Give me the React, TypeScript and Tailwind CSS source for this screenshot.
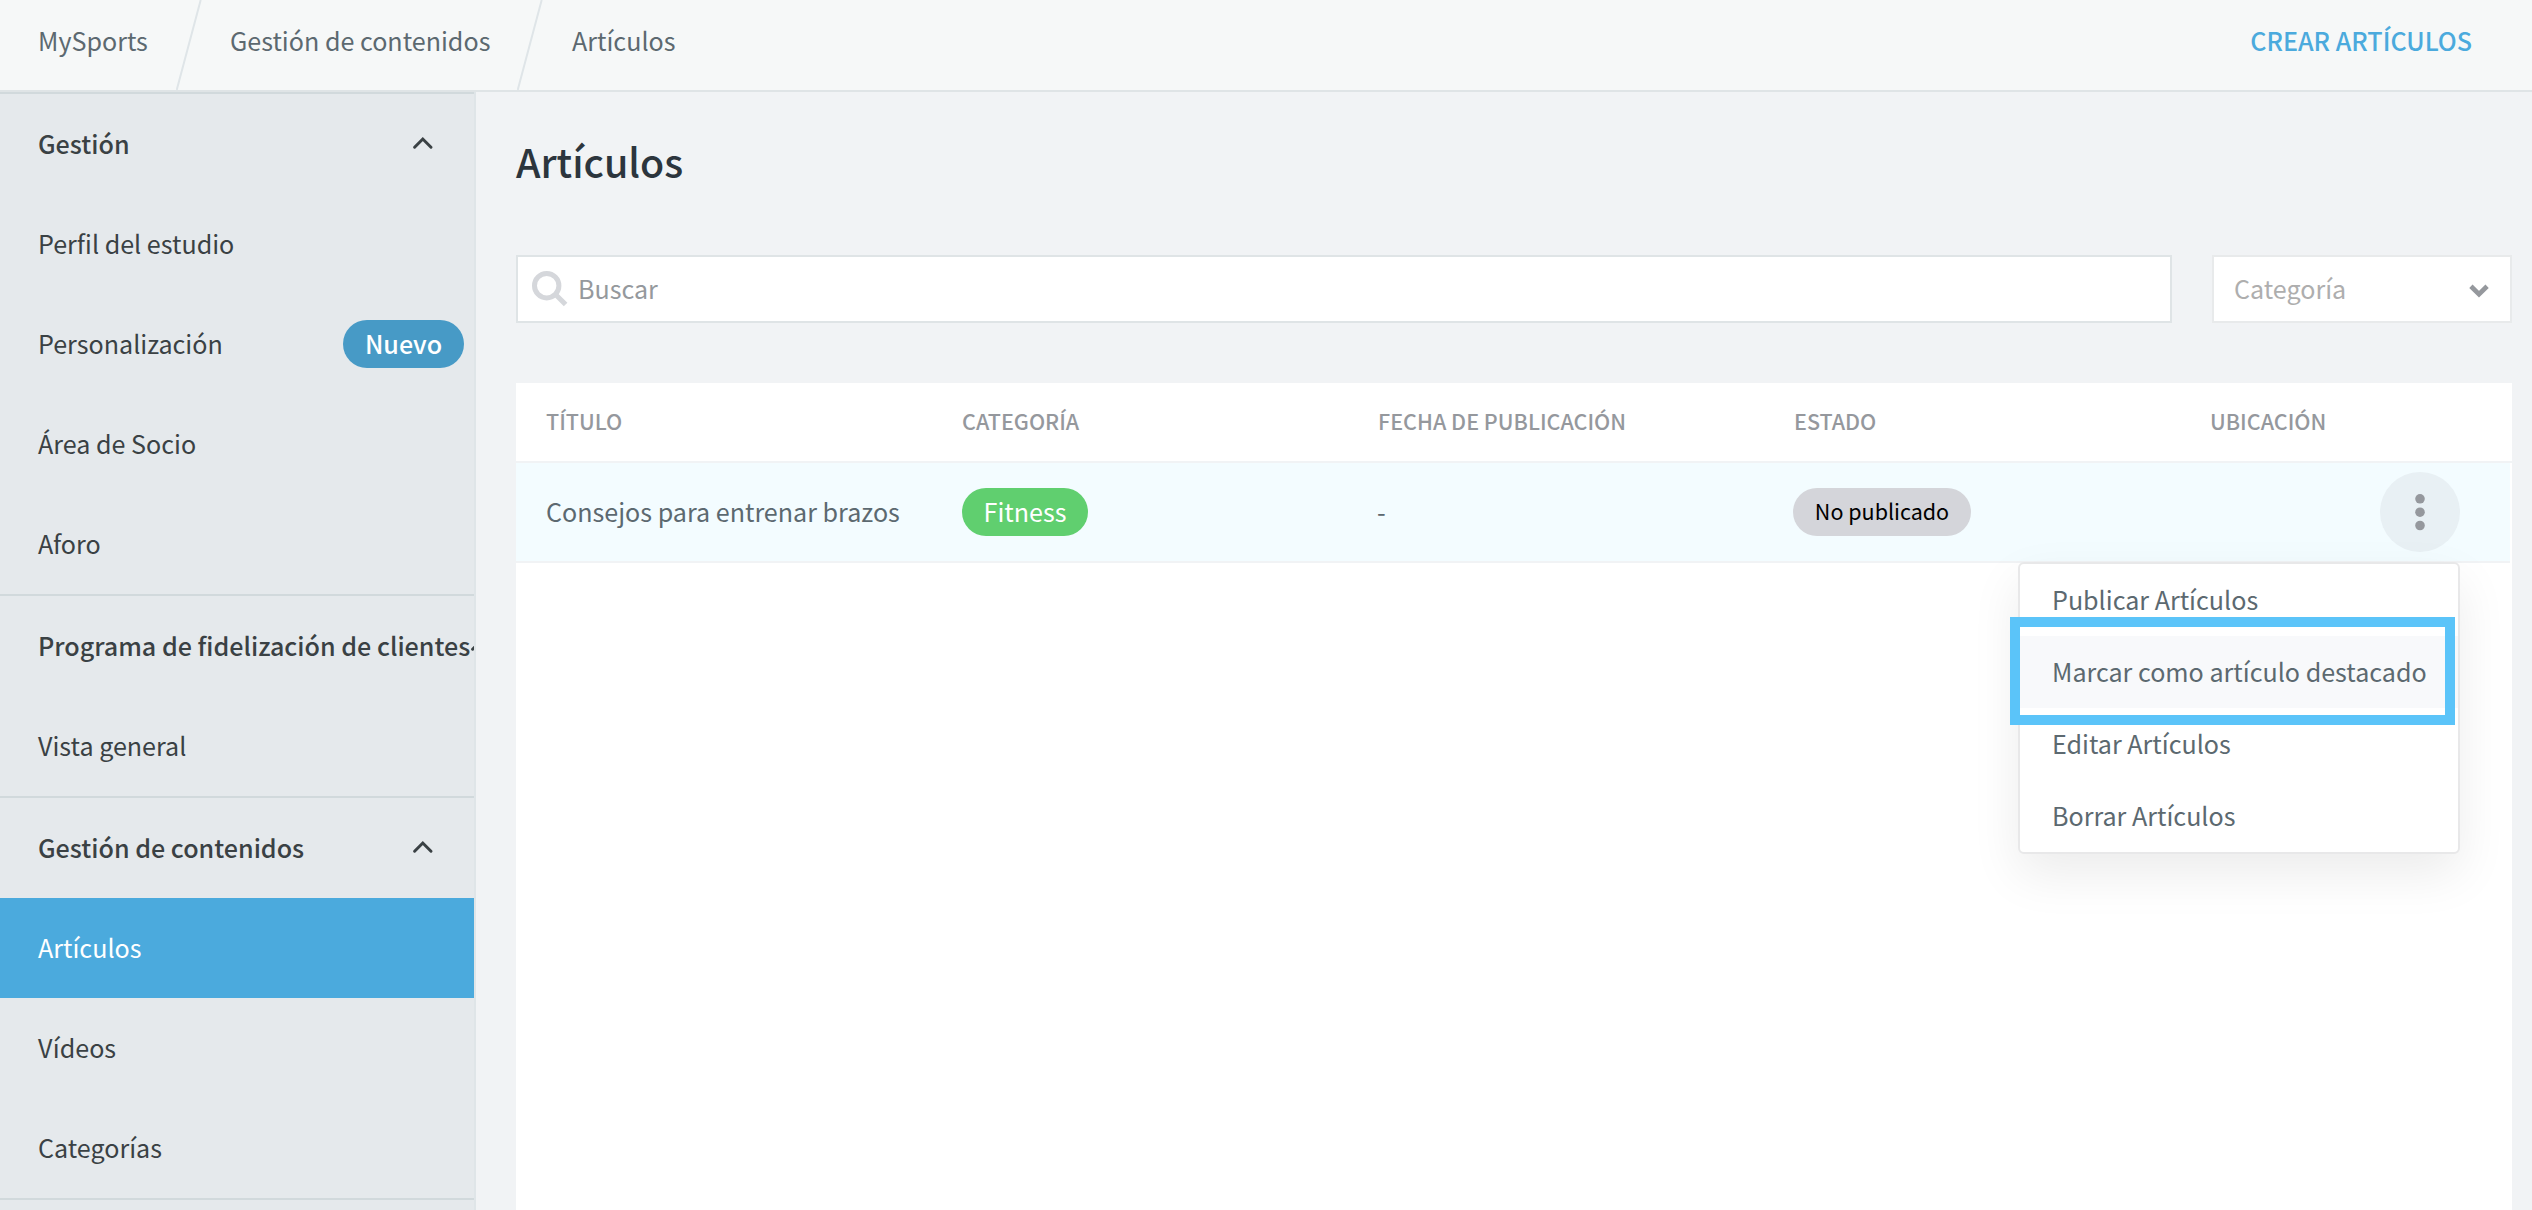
import type { ReactNode } from "react";

function ChevronUp() {
  return (
    <svg className="-ml-0.5 size-[26px] shrink-0" viewBox="0 0 26 26" fill="none" stroke="#3a4144" strokeWidth="3" strokeLinecap="round" strokeLinejoin="miter">
      <path d="M4.6 16.2 12.8 8l8.2 8.2" />
    </svg>
  );
}

function Slash() {
  return (
    <svg className="h-[90px] w-[26px] shrink-0" viewBox="0 0 26 90" fill="none" stroke="#dfe5e8" strokeWidth="2">
      <path d="M24.7 0 .7 90" />
    </svg>
  );
}

function GroupHeader({ label }: { label: string }) {
  return (
    <div className="flex h-[100px] items-center justify-between px-[38px] font-medium whitespace-nowrap">
      <span className="mb-0.5 shrink-0">{label}</span>
      <ChevronUp />
    </div>
  );
}

function NavItem({ label, active, children }: { label: string; active?: boolean; children?: ReactNode }) {
  return (
    <div className={active ? "flex h-[100px] items-center justify-between bg-[#4baadd] pr-[10px] pl-[38px] text-white" : "flex h-[100px] items-center justify-between pr-[10px] pl-[38px]"}>
      <span className="mb-0.5">{label}</span>
      {children}
    </div>
  );
}

const columns = ["TÍTULO", "CATEGORÍA", "FECHA DE PUBLICACIÓN", "ESTADO", "UBICACIÓN"];
const actions = ["Publicar Artículos", "Marcar como artículo destacado", "Editar Artículos", "Borrar Artículos"];

export default function App() {
  return (
    <div className="flex h-[1210px] w-[2532px] flex-col overflow-hidden bg-[#f1f3f5] font-['Noto_Sans_CJK_SC','Noto_Sans',sans-serif] text-[25.1px] leading-[36px] text-[#5c6970]">
      <header className="flex h-[92px] shrink-0 items-start border-b-2 border-[#dfe4e6] bg-[#f6f8f8]">
        <nav className="flex">
          <span className="mt-[22px] w-[176px] pl-[38px]">MySports</span>
          <Slash />
          <span className="mt-[22px] w-[315px] pl-[28px]">Gestión de contenidos</span>
          <Slash />
          <span className="mt-[22px] pl-[29px]">Artículos</span>
        </nav>
        <span className="mt-[22px] mr-[60px] ml-auto font-medium text-[#4baadd]">CREAR ARTÍCULOS</span>
      </header>

      <div className="flex min-h-0 flex-1">
        <aside className="w-[476px] shrink-0 overflow-hidden border-r-2 border-[#dfe5e8] bg-[#e5e9ec] text-[#3a4144]">
          <section className="border-t-2 border-[#d1d9dc]">
            <GroupHeader label="Gestión" />
            <NavItem label="Perfil del estudio" />
            <NavItem label="Personalización">
              <span className="flex h-12 w-[121px] items-center justify-center rounded-full bg-[#479ac6] pb-0.5 font-medium text-white">Nuevo</span>
            </NavItem>
            <NavItem label="Área de Socio" />
            <NavItem label="Aforo" />
          </section>
          <section className="border-t-2 border-[#d1d9dc]">
            <GroupHeader label="Programa de fidelización de clientes" />
            <NavItem label="Vista general" />
          </section>
          <section className="border-t-2 border-[#d1d9dc]">
            <GroupHeader label="Gestión de contenidos" />
            <NavItem label="Artículos" active />
            <NavItem label="Vídeos" />
            <NavItem label="Categorías" />
          </section>
          <section className="border-t-2 border-[#d1d9dc]" />
        </aside>

        <main className="flex flex-1 flex-col pt-[44px] pr-[20px] pl-[40px]">
          <h1 className="text-[39.4px] leading-[50px] font-medium text-[#2c353d]">Artículos</h1>

          <div className="mt-[69px] flex h-[68px] shrink-0 gap-[40px]">
            <div className="flex flex-1 items-center border-2 border-[#dfe4e6] bg-white text-[#95999d]">
              <svg className="ml-[12px] size-[40px]" viewBox="0 0 40 40" fill="none" stroke="#d5d7db" strokeWidth="5">
                <circle cx="16.7" cy="16.7" r="12.2" />
                <path d="m25.3 25.3 10.3 10.3" />
              </svg>
              <span className="mb-0.5 ml-[8px]">Buscar</span>
            </div>
            <div className="flex w-[300px] items-center justify-between border-2 border-[#e8eaeb] bg-white pr-[19px] pl-[20px] text-[#aeaeae]">
              <span className="mb-0.5">Categoría</span>
              <svg className="size-[24px]" viewBox="0 0 24 24" fill="none" stroke="#95989d" strokeWidth="4.7">
                <path d="m3.9 9.2 8.1 7.9 8.1-7.9" />
              </svg>
            </div>
          </div>

          <div className="mt-[60px] flex-1 bg-white">
            <div className="grid h-[80px] grid-cols-[416px_416px_416px_416px_1fr] items-center border-b-2 border-[#f1f3f5] pl-[30px] text-[21.5px] font-medium text-[#95989d]">
              {columns.map((c) => (
                <span key={c} className="mb-[3px]">{c}</span>
              ))}
            </div>
            <div className="mr-0.5 grid h-[100px] grid-cols-[416px_416px_416px_416px_1fr] items-center border-b-2 border-[#f1f3f5] bg-[#f3fcff] pl-[30px]">
              <span className="mb-0.5">Consejos para entrenar brazos</span>
              <div className="flex">
                <span className="flex h-12 w-[126px] items-center justify-center rounded-full bg-[#60cf6f] pb-0.5 text-white">Fitness</span>
              </div>
              <span className="mb-0.5 -ml-px">-</span>
              <div className="-ml-px flex">
                <span className="flex h-12 w-[178px] items-center justify-center rounded-full bg-[#d4d5da] pb-[3px] text-[21.5px] text-black">No publicado</span>
              </div>
              <div className="flex justify-end pr-[50px]">
                <div className="relative">
                  <div className="flex size-[80px] items-center justify-center rounded-full bg-[#e8f0f4]">
                    <svg className="h-[40px] w-[12px]" viewBox="0 0 12 40" fill="#95989d">
                      <circle cx="6" cy="6.8" r="4.8" />
                      <circle cx="6" cy="20.2" r="4.8" />
                      <circle cx="6" cy="33.5" r="4.8" />
                    </svg>
                  </div>
                  <div className="absolute top-[90px] right-0 w-[442px] rounded-[6px] border-2 border-[#e8e8e9] bg-white shadow-[0_20px_50px_rgba(0,0,0,0.08)]">
                    {actions.map((a, i) => (
                      <div key={a} className={i === 1 ? "flex h-[72px] items-center bg-[#f8f9fb] pl-[32px] whitespace-nowrap" : "flex h-[72px] items-center pl-[32px] whitespace-nowrap"}>
                        <span className="mb-0.5">{a}</span>
                      </div>
                    ))}
                    <div className="absolute top-[53px] -left-[10px] h-[108px] w-[445px] border-[10px] border-[#5bc4f9]" />
                  </div>
                </div>
              </div>
            </div>
          </div>
        </main>
      </div>
    </div>
  );
}
